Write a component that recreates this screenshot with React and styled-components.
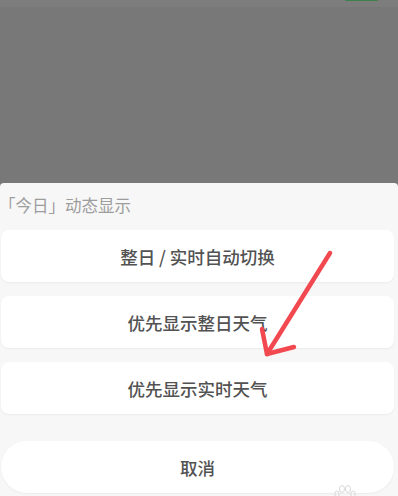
import React from 'react'
import styled, { createGlobalStyle } from 'styled-components';

const Global = createGlobalStyle`
  html, body {
    margin: 0;
    padding: 0;
    background: #f7f7f7;
    font-family: "Noto Sans CJK SC", "Noto Sans", sans-serif;
  }
`

const Screen = styled.div`
  position: relative;
  width: 398px;
  height: 496px;
  overflow: hidden;
  display: flex;
  flex-direction: column;
  background: #787878;
`

const Dim = styled.div`
  height: 183px;
  flex-shrink: 0;
  display: flex;
  flex-direction: column;
`

const DimBar = styled.div`
  height: 7px;
  background: #7d7d7d;
  display: flex;
  justify-content: flex-end;
  padding-right: 20px;
`

const GreenTab = styled.div`
  width: 33px;
  height: 1px;
  background: #3d8048;
  border-radius: 0 0 3px 3px;
`

const Sheet = styled.div`
  flex: 1;
  background: #f7f7f7;
  border-radius: 4px 4px 0 0;
  padding: 10px 4px 0 1px;
  display: flex;
  flex-direction: column;
`

const Title = styled.div`
  font-size: 16.5px;
  line-height: 24px;
  color: #9d9d9d;
  margin-left: -2px;
  margin-bottom: 13px;
`

const Options = styled.div`
  display: flex;
  flex-direction: column;
  gap: 14px;
`

const Option = styled.div`
  height: 52px;
  background: #ffffff;
  border-radius: ${p => p.$pill ? '26px' : '8px'};
  box-shadow: 0 1px 2px rgba(0, 0, 0, 0.05);
  display: flex;
  align-items: center;
  justify-content: center;
  font-size: 17.5px;
  font-weight: 500;
  color: #525252;
`

const Cancel = styled(Option)`
  margin-top: 27px;
`

const Arrow = styled.svg`
  position: absolute;
  left: 0;
  top: 0;
  pointer-events: none;
`

const Paw = styled.svg`
  position: absolute;
  left: 333px;
  top: 484px;
`

export default function App() {
  return (
    <>
      <Global />
      <Screen>
        <Dim>
          <DimBar>
            <GreenTab />
          </DimBar>
        </Dim>
        <Sheet>
          <Title>「今日」动态显示</Title>
          <Options>
            <Option>整日 / 实时自动切换</Option>
            <Option>优先显示整日天气</Option>
            <Option>优先显示实时天气</Option>
          </Options>
          <Cancel $pill>取消</Cancel>
        </Sheet>
        <Arrow width="398" height="496" viewBox="0 0 398 496">
          <g stroke="#f2484f" strokeWidth="4.5" strokeLinecap="round" strokeLinejoin="round" fill="none">
            <path d="M330 253 L267 354" />
            <path d="M262 329 L267 354 L294 347" />
          </g>
        </Arrow>
        <Paw width="24" height="14" viewBox="0 0 24 14">
          <g fill="none" stroke="#d9d9d9" strokeWidth="1">
            <ellipse cx="9" cy="5" rx="2.5" ry="3.5" />
            <ellipse cx="15" cy="5" rx="2.5" ry="3.5" />
            <ellipse cx="4" cy="10" rx="2.2" ry="3" />
            <ellipse cx="20" cy="10" rx="2.2" ry="3" />
          </g>
        </Paw>
      </Screen>
    </>
  );
}
